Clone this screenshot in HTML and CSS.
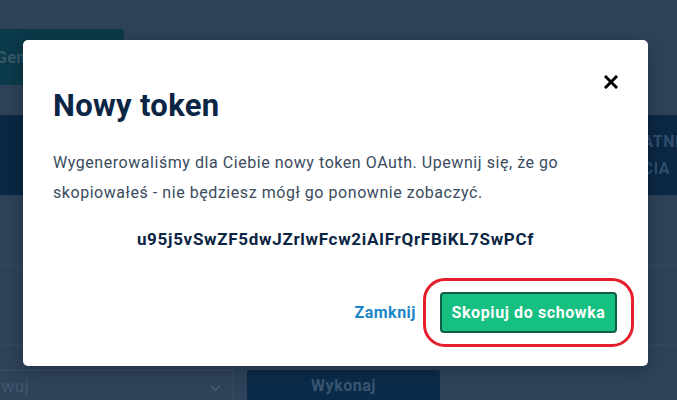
FILE: index.html
```html
<!DOCTYPE html>
<html lang="pl">

<head>
    <meta charset="UTF-8">
    <title>Nowy token</title>
    <link rel="stylesheet" href="styles.css">
</head>

<body>
    <div class="page">
        <div class="toolbar">
            <button class="gen-btn">Generuj token</button>
        </div>
        <div class="table-head">
            <span class="head-cell">OSTATNIEGO<br>UŻYCIA</span>
        </div>
        <div class="table-row first"></div>
        <div class="table-row"></div>
        <div class="actions">
            <div class="select">Dezaktywuj <span class="chevron"></span></div>
            <button class="run-btn">Wykonaj</button>
        </div>
    </div>

    <div class="overlay">
        <div class="modal">
            <button class="close" aria-label="Zamknij">
                <svg width="14" height="14" viewBox="0 0 14 14">
                    <path d="M2 2 L12 12 M12 2 L2 12" stroke="#000" stroke-width="3" stroke-linecap="square" />
                </svg>
            </button>
            <h2 class="modal-title">Nowy token</h2>
            <p class="modal-text">Wygenerowaliśmy dla Ciebie nowy token OAuth. Upewnij się, że go skopiowałeś - nie będziesz mógł go ponownie zobaczyć.</p>
            <p class="token">u95j5vSwZF5dwJZrlwFcw2iAIFrQrFBiKL7SwPCf</p>
            <div class="modal-footer">
                <a href="#" class="link">Zamknij</a>
                <div class="highlight">
                    <button class="copy-btn">Skopiuj do schowka</button>
                </div>
            </div>
        </div>
    </div>
</body>

</html>
```

FILE: styles.css
```css
* {
    margin: 0;
    padding: 0;
    box-sizing: border-box;
}

body {
    width: 677px;
    height: 400px;
    overflow: hidden;
    background-color: #2e4259;
    font-family: Roboto, 'DejaVu Sans', sans-serif;
    position: relative;
}

/* page behind the dialog (already dimmed) */
.page {
    display: flex;
    flex-direction: column;
}

.toolbar {
    height: 115px;
    padding-top: 29px;
}

.gen-btn {
    width: 124px;
    height: 56px;
    background-color: #0b3a4a;
    border: none;
    border-radius: 0 4px 4px 0;
    color: #37596a;
    font-family: inherit;
    font-weight: 700;
    font-size: 16px;
    letter-spacing: 0.5px;
    text-align: left;
    text-indent: -4px;
    white-space: nowrap;
    overflow: hidden;
}

.table-head {
    height: 80px;
    background-color: #0b2744;
    display: flex;
    align-items: center;
    padding-left: 611px;
}

.head-cell {
    color: #2f4d6c;
    font-weight: 700;
    font-size: 16px;
    letter-spacing: 0.5px;
    line-height: 27px;
    white-space: nowrap;
}

.table-row {
    height: 79px;
    border-bottom: 1px solid #34495f;
}

.table-row.first {
    height: 71px;
}

.actions {
    display: flex;
    gap: 13px;
    padding-top: 25px;
}

.select {
    width: 234px;
    height: 40px;
    border: 1px solid #3a4e64;
    border-left: none;
    border-radius: 0 3px 3px 0;
    color: #435870;
    font-size: 17px;
    letter-spacing: 0.5px;
    line-height: 30px;
    text-indent: -62px;
    white-space: nowrap;
    position: relative;
}

.chevron {
    position: absolute;
    right: 14px;
    top: 12px;
    width: 7px;
    height: 7px;
    border-right: 2px solid #435870;
    border-bottom: 2px solid #435870;
    transform: rotate(45deg);
}

.run-btn {
    width: 193px;
    height: 40px;
    background-color: #0b2b4a;
    border: none;
    border-radius: 3px;
    color: #3a5672;
    font-family: inherit;
    font-weight: 700;
    font-size: 16px;
    letter-spacing: 0.5px;
    padding-bottom: 10px;
}

/* dialog */
.overlay {
    position: absolute;
    top: 40px;
    left: 23px;
}

.modal {
    width: 625px;
    height: 326px;
    background-color: #fff;
    border-radius: 5px;
    padding: 44px 30px 0 30px;
    box-shadow: 0 4px 18px rgba(0, 0, 0, 0.25);
    position: relative;
}

.close {
    position: absolute;
    top: 35px;
    right: 30px;
    background: none;
    border: none;
    line-height: 0;
}

.modal-title {
    font-size: 31px;
    font-weight: 700;
    letter-spacing: 0.3px;
    color: #0b2544;
    line-height: 44px;
}

.modal-text {
    margin-top: 20px;
    font-size: 16px;
    letter-spacing: 0.55px;
    line-height: 30px;
    color: #3a4b5e;
}

.token {
    margin-top: 21px;
    text-align: center;
    font-size: 17px;
    font-weight: 700;
    letter-spacing: 0.7px;
    color: #0b2544;
}

.modal-footer {
    display: flex;
    justify-content: flex-end;
    align-items: center;
    gap: 7px;
    margin-top: 29px;
    margin-right: -16px;
}

.link {
    color: #1a86c8;
    font-weight: 700;
    font-size: 16px;
    letter-spacing: 0.5px;
    text-decoration: none;
}

.highlight {
    border: 3px solid #e41e2b;
    border-radius: 22px;
    padding: 11px 14px;
}

.copy-btn {
    width: 177px;
    height: 41px;
    background-color: #15c081;
    border: 2px solid #0d5e45;
    border-radius: 4px;
    color: #fff;
    font-family: inherit;
    font-weight: 700;
    font-size: 16px;
    letter-spacing: 0.6px;
}
```
